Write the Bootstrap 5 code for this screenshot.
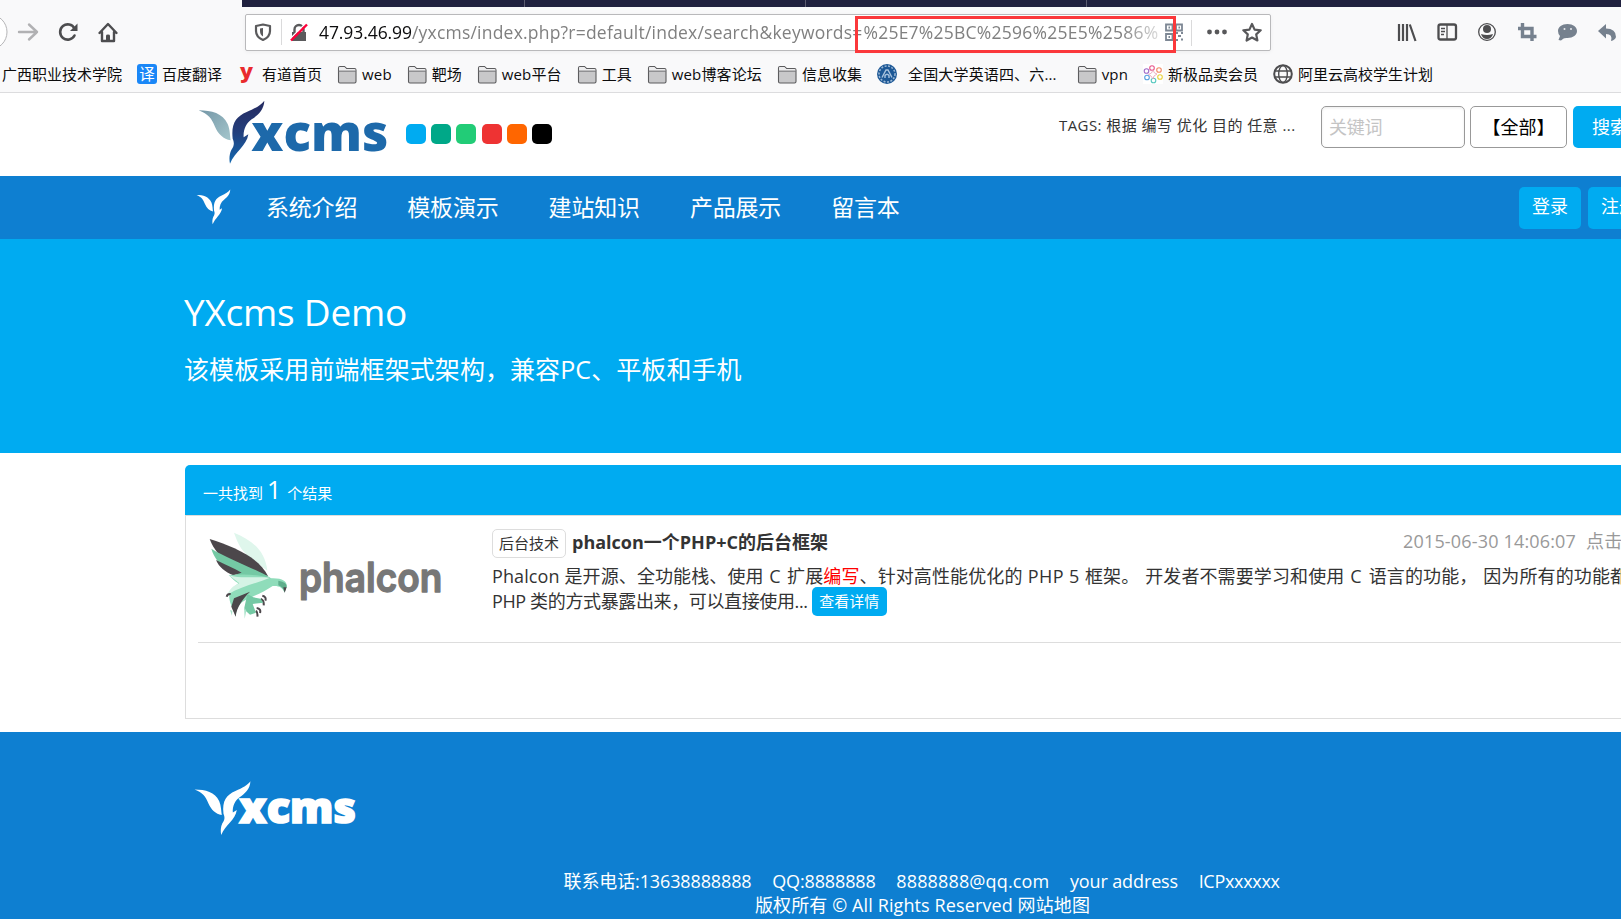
<!DOCTYPE html>
<html lang="zh-CN">
<head>
<meta charset="utf-8">
<title>YXcms Demo</title>
<link rel="stylesheet" href="https://cdn.jsdelivr.net/npm/bootstrap@5.3.0/dist/css/bootstrap.min.css">
<script src="https://cdn.jsdelivr.net/npm/bootstrap@5.3.0/dist/js/bootstrap.bundle.min.js"></script>
<style>
body{font-family:"Open Sans","Noto Sans CJK SC",sans-serif;font-size:18px;line-height:25px;color:#333;height:919px;overflow:hidden;background:#fff;white-space:nowrap}
svg{display:block;flex:none}
.chrome{height:93px;background:#f9f9fa;border-bottom:1px solid #dcdcde}
.tabstrip{height:7px;margin-left:242px;background:#20213f;padding-left:2px;gap:280px}
.tabstrip i{width:1px;background:#5b5b70}
.tabstrip i:first-child{margin-left:280px}
.toolbar{height:50px}
.urlbar{width:1026px;height:37px;margin-top:7px;margin-left:123px;background:#fff;border:1px solid #b9b9bb;border-radius:2px;font-size:17.5px;color:#808080;box-shadow:0 1px 4px rgba(0,0,0,.05)}
.urlbar b{font-weight:400;color:#0c0c0d;letter-spacing:-.08px}
.urltext{width:845px;margin-top:-1px;-webkit-mask-image:linear-gradient(90deg,#000 95%,transparent 101%);mask-image:linear-gradient(90deg,#000 95%,transparent 101%)}
.urltext span{letter-spacing:.21px}
.urltext .query{letter-spacing:.24px;margin-left:1px}
.redbox{left:855px;top:16px;width:321px;height:37px;border:3px solid #fb383b}
.bookmarks{height:33px;font-size:15px;color:#0c0c0d;padding-left:2px;line-height:20px}
.bm{margin-right:15px;gap:5px}
.bm-wide{margin-right:20px;gap:11px}
.ls-w{letter-spacing:.15px}
.sitehead{height:83px;padding-left:198px}
.sitelogo{margin-top:4px}
.swatches{gap:5.2px;margin:31px 0 0 14px}
.swatch{width:20px;height:20px;border-radius:5px}
.tags{font-size:15px;letter-spacing:.44px;margin:20px 0 0 507px}
.searchbar{width:300px;padding-top:13px}
.fld{height:42px;border:1px solid #999;border-radius:5px;background:#fff}
.kw{width:144px;padding-left:7px;color:#c4c4c4;letter-spacing:-.3px;box-shadow:inset 0 1px 3px rgba(0,0,0,.08)}
.cat{width:97px;color:#000;margin:0 6px 0 5px}
.bluebtn{height:42px;background:#00abf1;color:#fff;border-radius:5px}
.go{width:76px;padding-left:19px}
.mainnav{height:63px;background:#0e7fd1;color:#fff;font-size:23px;padding-left:196px}
.mainnav a{color:#fff;text-decoration:none;width:141.3px;letter-spacing:-.2px}
.userbtns{width:102px;gap:7px}
.userbtns .bluebtn{width:62px;font-size:18px;padding-top:7px}
.hero{height:214px;background:#00abf1;color:#fff;padding:52px 0 0 184px}
.hero h1{font-size:37px;line-height:42px;font-weight:400;letter-spacing:-.24px;margin:0;height:60px}
.hero p{font-size:25px;line-height:36px;margin:0;letter-spacing:.08px}
.result{margin:12px -20px 0 185px}
.rhead{height:50px;background:#00abf1;color:#fff;font-size:15px;border-radius:5px 5px 0 0;padding-left:18px}
.rhead big{font-size:25px;margin:12px 6px 0 4px}
.rbody{height:204px;border:1px solid #ddd;padding:0 0 0 12px}
.ritem{height:127px;border-bottom:1px solid #ddd}
.rtext{margin-left:50px;padding-top:13px;min-width:0}
.rtitle{height:35px}
.rtitle strong{margin:1px 0 0 6px}
.cattag{border:1px solid #ddd;border-radius:5px;width:74px;height:29px;font-size:15px;line-height:26px;text-align:center}
.meta{color:#999;width:237px;letter-spacing:.17px}
.meta span{margin-left:10px}
.desc{height:25px;letter-spacing:.11px;white-space:pre}
.desc .c1{letter-spacing:.9px}
.desc .c2{letter-spacing:.45px}
.desc .c3{letter-spacing:1.2px}
.desc2{height:25px;letter-spacing:-.37px}
.more{background:#00abf1;color:#fff;border-radius:5px;height:29px;width:75px;font-size:15px;line-height:29px;text-align:center;margin-left:4px;letter-spacing:0}
.foot{margin-top:13px;height:187px;background:#0e7fd1;color:#fff;padding:46px 0 0 194px}
.links{gap:20.6px;margin:31px 0 -1px 369.5px;letter-spacing:-.12px}
.links .mail{letter-spacing:.14px}
.links .icp{letter-spacing:-.3px}
.copy{margin-left:561px;letter-spacing:.11px}
</style>
</head>
<body>
<svg width="0" height="0" class="position-absolute">
  <defs>
    <linearGradient id="wing" x1="0" y1="0" x2="1" y2="1"><stop offset="0" stop-color="#7496a6"/><stop offset="1" stop-color="#a4c6cc"/></linearGradient>
    <linearGradient id="body" x1="0" y1="0" x2="0" y2="1"><stop offset="0" stop-color="#252a60"/><stop offset=".5" stop-color="#243f7c"/><stop offset="1" stop-color="#1268b0"/></linearGradient>
    <path id="w1" d="M56 61C95 61 128 70 143 102C150 118 150 138 152 151C130 146 115 133 105 110C95 86 85 72 56 61Z"/>
    <path id="w2" d="M253 32C252 60 232 77 215 88C199 99 189 120 191 142L205 133C200 168 164 186 150 221C147 208 148 192 154 180C162 168 164 160 158 146C153 100 168 80 200 66C226 55 242 46 253 32Z"/>
    <g id="folder"><path d="M1.500 17.500V4Q1.500 2.500 3 2.500H7.500L9.500 4.500H17.500Q19 4.500 19 6V17.500Q19 19 17.500 19H3Q1.500 19 1.500 17.500Z" fill="#c8c8ca" stroke="#5c5c5e" stroke-width="1.1"/><path d="M2 4Q2 3 3 3H7.300L9.300 5H17.500Q18.500 5 18.500 6.500H2Z" fill="#ededee"/><path d="M1.500 7.200H19" stroke="#77777a"/></g>
  </defs>
</svg>

<header class="chrome position-relative">
  <div class="tabstrip d-flex"><i></i><i></i><i></i></div>
  <div class="toolbar d-flex">
    <svg width="122" height="50" viewBox="0 7 122 50" fill="none" stroke="#4d4d4f">
      <circle cx="-10.500" cy="32" r="17.500" stroke="#b5b5b7" fill="#fff"/>
      <path d="M19 32H37M29 24.500L37 32L29 39.500" stroke="#b1b1b3" stroke-width="2.400" stroke-linecap="round" stroke-linejoin="round"/>
      <path d="M74.500 28.500A7.600 7.600 0 1 0 74.500 35.500" stroke-width="2.600" stroke-linecap="round"/><path d="M77.500 23.500V31H70Z" fill="#4d4d4f" stroke="none"/>
      <path d="M99.500 33L108 24L116.500 33M102 32V41H114V32" stroke-width="2.400" stroke-linecap="round" stroke-linejoin="round"/><path d="M106 41V35.500Q106 34.500 108 34.500T110 35.500V41Z" fill="#4d4d4f" stroke="none"/>
    </svg>
    <div class="urlbar d-flex align-items-center">
      <svg width="73" height="35" viewBox="246 15 73 35" fill="none">
        <path d="M263 24.500L270 26V31Q270 37 263 40Q256 37 256 31V26Z" stroke="#5a5a5c" stroke-width="2.200" stroke-linejoin="round"/><path d="M263 28V36.500Q260 34.500 260 31V28.500Z" fill="#5a5a5c"/>
        <path d="M281.500 19V45" stroke="#dadadb"/>
        <path d="M292 32H306V41H292Z" fill="#5a5a5c"/><path d="M294.500 32V29.500A4.500 4.500 0 0 1 303.500 29.500V32" stroke="#5a5a5c" stroke-width="2.400"/><path d="M289.500 39.500L305.500 23.500" stroke="#fff" stroke-width="1.500"/><path d="M291 40.500L307 24.500" stroke="#ff0039" stroke-width="2.400"/>
      </svg>
      <div class="urltext"><b>47.93.46.99</b><span>/yxcms/index.php?r=default/index/search&amp;keywords=</span><span class="query">%25E7%25BC%2596%25E5%2586%</span></div>
      <svg width="105" height="35" viewBox="1164 15 105 35" fill="none">
        <g stroke="#7d8794" stroke-width="1.800"><path d="M1166 24.500H1172.500V30.500H1166ZM1176 24.500H1182V30.500H1176ZM1166 34H1172.500V40H1166Z"/><path d="M1168.500 27.500H1170M1178.500 27.500H1180M1168.500 37H1170M1175 33H1178M1181 33H1183M1178 36H1181M1175 37V39M1175 40H1178M1181 39.500H1183"/></g>
        <path d="M1191.500 20V46" stroke="#dadadb"/>
        <g fill="#58585a"><circle cx="1209.500" cy="32" r="2.400"/><circle cx="1217" cy="32" r="2.400"/><circle cx="1224.500" cy="32" r="2.400"/></g>
        <path d="M1252 24L1254.600 29.600L1260.700 30.300L1256.200 34.400L1257.400 40.500L1252 37.500L1246.600 40.500L1247.800 34.400L1243.300 30.300L1249.400 29.600Z" stroke="#58585a" stroke-width="2.200" stroke-linejoin="round"/>
      </svg>
    </div>
    <svg class="ms-auto" width="231" height="50" viewBox="1390 7 231 50" fill="none">
      <path d="M1399 24V41M1403 24V41M1407 24V41M1409.800 24.500L1415.500 41" stroke="#4d4d4f" stroke-width="2.200"/>
      <rect x="1438.500" y="24.500" width="17.500" height="15" rx="2" stroke="#4d4d4f" stroke-width="2.300"/><path d="M1447 25V40M1441 28.500H1445M1441 31.500H1445M1441 34.500H1444" stroke="#4d4d4f" stroke-width="1.300"/>
      <circle cx="1487" cy="32" r="8.300" stroke="#4d4d4f" stroke-width="1.300"/><circle cx="1487" cy="29" r="4" fill="#4d4d4f"/><path d="M1481 34Q1487 36 1493 34Q1491.500 39 1487 39T1481 34Z" fill="#4d4d4f"/>
      <path d="M1518 28.500H1532V41M1522.500 23V36.500H1536.500" stroke="#76818e" stroke-width="3.400"/>
      <path d="M1567.500 24C1573 24 1577 27 1577 31S1573 38 1567.500 38C1565 38 1564 38 1561 40.500L1558.500 40L1560 36Q1558 34 1558 31C1558 27 1562 24 1567.500 24Z" fill="#76818e"/><circle cx="1564.500" cy="29" r="1" fill="#e8eaec"/><circle cx="1571" cy="29" r="1" fill="#e8eaec"/>
      <path d="M1598 31L1606 24V28.500Q1616 28.500 1616 37Q1615 40 1611 41Q1613 34 1606 34V38.500Z" fill="#76818e"/>
    </svg>
  </div>
  <nav class="bookmarks d-flex align-items-center">
    <div class="bm">广西职业技术学院</div>
    <div class="bm d-flex align-items-center"><svg width="20" height="20"><rect width="20" height="20" rx="3" fill="#1a87f7"/><text x="2.300" y="15.600" font-size="15.500" fill="#fff">译</text></svg>百度翻译</div>
    <div class="bm d-flex align-items-center"><svg width="20" height="20"><text x="3" y="13.500" font-size="19" font-weight="800" fill="#e92a2d" textLength="13" lengthAdjust="spacingAndGlyphs">y</text></svg>有道首页</div>
    <div class="bm d-flex align-items-center"><svg width="20" height="20"><use href="#folder"/></svg><span class="ls-w">web</span></div>
    <div class="bm d-flex align-items-center"><svg width="20" height="20"><use href="#folder"/></svg>靶场</div>
    <div class="bm d-flex align-items-center"><svg width="20" height="20"><use href="#folder"/></svg><span class="ls-w">web平台</span></div>
    <div class="bm d-flex align-items-center"><svg width="20" height="20"><use href="#folder"/></svg>工具</div>
    <div class="bm d-flex align-items-center"><svg width="20" height="20"><use href="#folder"/></svg><span class="ls-w">web博客论坛</span></div>
    <div class="bm d-flex align-items-center"><svg width="20" height="20"><use href="#folder"/></svg>信息收集</div>
    <div class="bm bm-wide d-flex align-items-center"><svg width="20" height="20" fill="none"><circle cx="10" cy="10" r="10" fill="#1d5896"/><circle cx="10" cy="10" r="8" stroke="#9db9d6" stroke-width="1.500" stroke-dasharray="2 1.500"/><path d="M5 13.500L9 6H11L15 13.500M8 14V11.500Q10 9 12 11.500V14" stroke="#a9c3de" stroke-width="1.400"/></svg><span class="ls-w">全国大学英语四、六...</span></div>
    <div class="bm d-flex align-items-center"><svg width="20" height="20"><use href="#folder"/></svg><span class="ls-w">vpn</span></div>
    <div class="bm d-flex align-items-center"><svg width="20" height="20" fill="none" stroke-width="1.100"><rect width="20" height="20" fill="#fff"/><circle cx="9" cy="4" r="2.300" stroke="#e8578c"/><circle cx="16" cy="6" r="2.300" stroke="#f18a67"/><circle cx="17" cy="13" r="2.300" stroke="#e8d33b"/><circle cx="10.500" cy="16.500" r="2.300" stroke="#58c8c0"/><circle cx="4" cy="13.500" r="2.300" stroke="#5aa2e0"/><circle cx="3.500" cy="7" r="2.300" stroke="#a06cc8"/><path d="M10 6L11.500 9L14 10L11 12L10 15L8 12L5.500 10.500L8.500 9Z" stroke="#e9a0b8" stroke-width=".8"/></svg>新极品卖会员</div>
    <div class="bm d-flex align-items-center"><svg width="20" height="20" fill="none" stroke="#4d4d4f"><circle cx="10" cy="10" r="8.800" stroke-width="2"/><ellipse cx="10" cy="10" rx="4.300" ry="8.500" stroke-width="1.400"/><path d="M2 7H18M2 13H18" stroke-width="1.400"/></svg>阿里云高校学生计划</div>
  </nav>
  <div class="redbox position-absolute"></div>
</header>

<section class="sitehead d-flex">
  <svg class="sitelogo" width="194" height="70" viewBox="54 21 582 210"><use href="#w1" fill="url(#wing)"/><use href="#w2" fill="url(#body)"/><text x="214" y="182" font-size="153" font-weight="800" fill="#1d69aa" textLength="411" lengthAdjust="spacingAndGlyphs">xcms</text></svg>
  <div class="swatches d-flex">
    <span class="swatch" style="background:#00abf1"></span><span class="swatch" style="background:#00a888"></span><span class="swatch" style="background:#22cc77"></span><span class="swatch" style="background:#ee3333"></span><span class="swatch" style="background:#ff6600"></span><span class="swatch" style="background:#000"></span>
  </div>
  <div class="tags">TAGS: 根据 编写 优化 目的 任意 ...</div>
  <div class="searchbar d-flex ms-auto">
    <div class="fld kw d-flex align-items-center flex-shrink-0">关键词</div>
    <div class="fld cat d-flex align-items-center justify-content-center flex-shrink-0">【全部】</div>
    <div class="bluebtn go d-flex align-items-center flex-shrink-0">搜索</div>
  </div>
</section>

<nav class="mainnav d-flex align-items-center">
  <svg width="70" height="63" viewBox="197 0 70 63"><g fill="#fff" transform="translate(188 7.700) scale(.171 .184)"><use href="#w1"/><use href="#w2"/></g></svg>
  <a href="#">系统介绍</a><a href="#">模板演示</a><a href="#">建站知识</a><a href="#">产品展示</a><a href="#">留言本</a>
  <div class="userbtns d-flex ms-auto">
    <div class="bluebtn d-flex justify-content-center flex-shrink-0">登录</div>
    <div class="bluebtn d-flex justify-content-center flex-shrink-0">注册</div>
  </div>
</nav>

<section class="hero">
  <h1>YXcms Demo</h1>
  <p>该模板采用前端框架式架构，兼容PC、平板和手机</p>
</section>

<main class="result">
  <div class="rhead d-flex align-items-baseline"><span>一共找到</span><big>1</big><span>个结果</span></div>
  <div class="rbody">
    <div class="ritem d-flex">
      <svg width="244" height="100" viewBox="84 198 732 300" overflow="visible">
        <path d="M192 248C245 270 285 300 292 362L250 330C215 305 205 285 192 248Z" fill="#dff6ec"/>
        <path d="M119 267C190 290 265 320 294 378C240 372 150 350 119 267Z" fill="#4c474b"/>
        <path d="M124 296C170 325 255 355 302 384L262 396C190 375 140 350 124 296Z" fill="#74c9a4"/>
        <path d="M138 330C165 345 190 352 215 368L190 376C165 365 147 352 138 330Z" fill="#4c474b"/>
        <path d="M176 375C220 372 262 372 305 385C340 384 352 396 350 410L343 426C338 412 325 406 308 408C285 425 245 440 218 455C205 465 197 480 198 500C185 470 175 450 178 430C188 415 195 408 205 400C195 394 186 386 176 375Z" fill="#8fdcba"/>
        <path d="M176 375C215 388 250 378 300 383C260 400 215 408 172 434C182 412 195 405 208 400Z" fill="#d5f3e5"/>
        <path d="M325 392Q352 396 350 410L343 428Q341 412 325 406Z" fill="#5fae8c"/><path d="M340 412L350 412L344 428Z" fill="#4c474b"/>
        <path d="M240 425L192 445L184 470L197 500C200 470 220 445 240 425Z" fill="#4c474b"/>
        <path d="M170 440Q172 431 182 432M277 437Q290 440 286 452M272 447Q283 452 281 466M260 474Q274 476 270 489M258 482Q264 490 262 500" fill="none" stroke="#4c474b" stroke-width="6"/>
        <path d="M232 432L222 478L240 494L258 488L248 462L280 458L272 446L250 442Z" fill="#74c9a4"/><path d="M222 470L224 506L229 482ZM180 480L186 497L187 482Z" fill="#a9e3ca"/>
        <text x="387" y="425" font-family="Inter" font-size="122" font-weight="600" fill="#777" stroke="#777" stroke-width="4" stroke-linejoin="round" textLength="430" lengthAdjust="spacingAndGlyphs">phalcon</text>
      </svg>
      <div class="rtext flex-grow-1">
        <div class="rtitle d-flex"><span class="cattag">后台技术</span><strong>phalcon一个PHP+C的后台框架</strong><div class="meta ms-auto">2015-06-30 14:06:07<span>点击:2015</span></div></div>
        <div class="desc">Phalcon 是开源、全功能栈、使用<span class="c1"> C </span>扩展<span class="text-danger" style="color:#f00!important">编写</span>、针对高性能优化的<span class="c2"> PHP 5 </span>框架。<span class="c3"> </span>开发者不需要学习和使用<span class="c3"> C </span>语言的功能，<span class="c3"> </span>因为所有的功能都以</div>
        <div class="desc2 d-flex align-items-center">PHP 类的方式暴露出来，可以直接使用...<span class="more">查看详情</span></div>
      </div>
    </div>
  </div>
</main>

<footer class="foot">
  <svg width="165" height="60" viewBox="54 21 582 210"><g fill="#fff"><use href="#w1"/><use href="#w2"/><text x="214" y="179" font-size="150" font-weight="800" stroke="#fff" stroke-width="6" textLength="411" lengthAdjust="spacingAndGlyphs">xcms</text></g></svg>
  <div class="links d-flex"><span>联系电话:13638888888</span><span>QQ:8888888</span><span class="mail">8888888@qq.com</span><span>your address</span><span class="icp">ICPxxxxxx</span></div>
  <div class="copy">版权所有 © All Rights Reserved 网站地图</div>
</footer>
</body>
</html>
